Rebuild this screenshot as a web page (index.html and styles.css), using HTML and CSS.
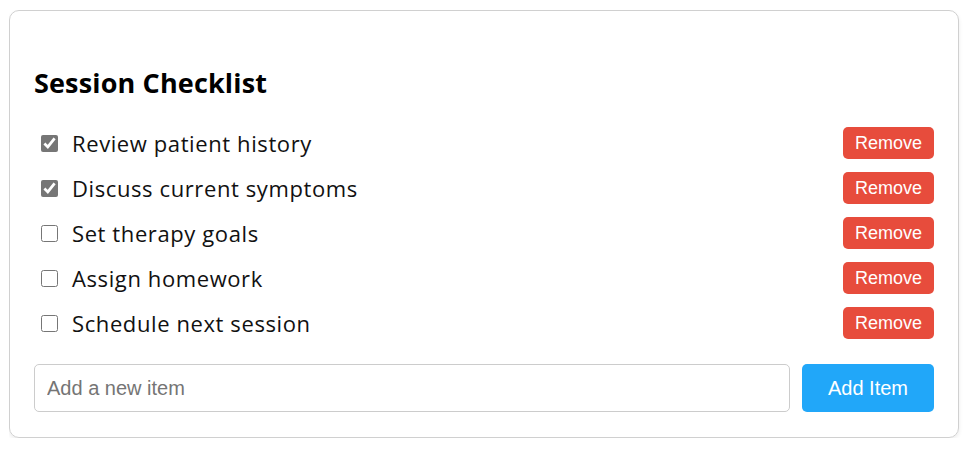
FILE: index.html
```html
<!DOCTYPE html>
<html lang="en">
<head>
<meta charset="utf-8">
<title>Session Checklist</title>
<link rel="stylesheet" href="styles.css">
</head>
<body>
<div class="card">
  <h2 class="title">Session Checklist</h2>
  <ul class="list">
    <li class="item"><label class="item-label"><input type="checkbox" class="check" checked><span class="item-text">Review patient history</span></label><button class="remove">Remove</button></li>
    <li class="item"><label class="item-label"><input type="checkbox" class="check" checked><span class="item-text">Discuss current symptoms</span></label><button class="remove">Remove</button></li>
    <li class="item"><label class="item-label"><input type="checkbox" class="check"><span class="item-text">Set therapy goals</span></label><button class="remove">Remove</button></li>
    <li class="item"><label class="item-label"><input type="checkbox" class="check"><span class="item-text">Assign homework</span></label><button class="remove">Remove</button></li>
    <li class="item"><label class="item-label"><input type="checkbox" class="check"><span class="item-text">Schedule next session</span></label><button class="remove">Remove</button></li>
  </ul>
  <div class="add-row">
    <input type="text" class="add-input" placeholder="Add a new item">
    <button class="add-btn">Add Item</button>
  </div>
</div>
</body>
</html>
```
FILE: styles.css
```css
html, body {
  background: #ffffff;
}
body {
  margin: 10px 9px;
  font-family: "Open Sans", "Noto Sans", sans-serif;
  color: #111;
}
.card {
  width: 950px;
  height: 428px;
  box-sizing: border-box;
  border: 1px solid #d0d0d0;
  border-radius: 10px;
  box-shadow: 0 2px 4px rgba(0,0,0,0.08);
  padding: 24px;
}
.title {
  margin: 32px 0 28px 0;
  font-size: 27px;
  line-height: 32px;
  font-weight: 700;
  color: #000;
  letter-spacing: 0.15px;
}
.list {
  list-style: none;
  margin: 0;
  padding: 0;
}
.item {
  display: flex;
  align-items: center;
  justify-content: space-between;
  height: 32px;
  margin-bottom: 13px;
}
.item:last-child {
  margin-bottom: 0;
}
.item-label {
  display: flex;
  align-items: center;
}
.check {
  width: 17px;
  height: 17px;
  margin: 0 14px 0 7px;
  accent-color: #767676;
}
.item-text {
  font-size: 22px;
  letter-spacing: 0.6px;
  color: #111;
}
.remove {
  font-family: "Liberation Sans", Arial, sans-serif;
  font-size: 18px;
  color: #fff;
  background: #e74c3c;
  border: none;
  border-radius: 5px;
  width: 91px;
  height: 32px;
  padding: 0;
}
.add-row {
  display: flex;
  gap: 12px;
  margin-top: 25px;
}
.add-input {
  flex: 1;
  height: 48px;
  box-sizing: border-box;
  border: 1px solid #cccccc;
  border-radius: 5px;
  padding: 0 12px;
  font-family: "Liberation Sans", Arial, sans-serif;
  font-size: 20px;
  color: #333;
}
.add-input::placeholder {
  color: #757575;
}
.add-btn {
  width: 132px;
  height: 48px;
  border: none;
  border-radius: 5px;
  background: #21a7f9;
  color: #fff;
  font-family: "Liberation Sans", Arial, sans-serif;
  font-size: 20px;
  padding: 0;
}
```
